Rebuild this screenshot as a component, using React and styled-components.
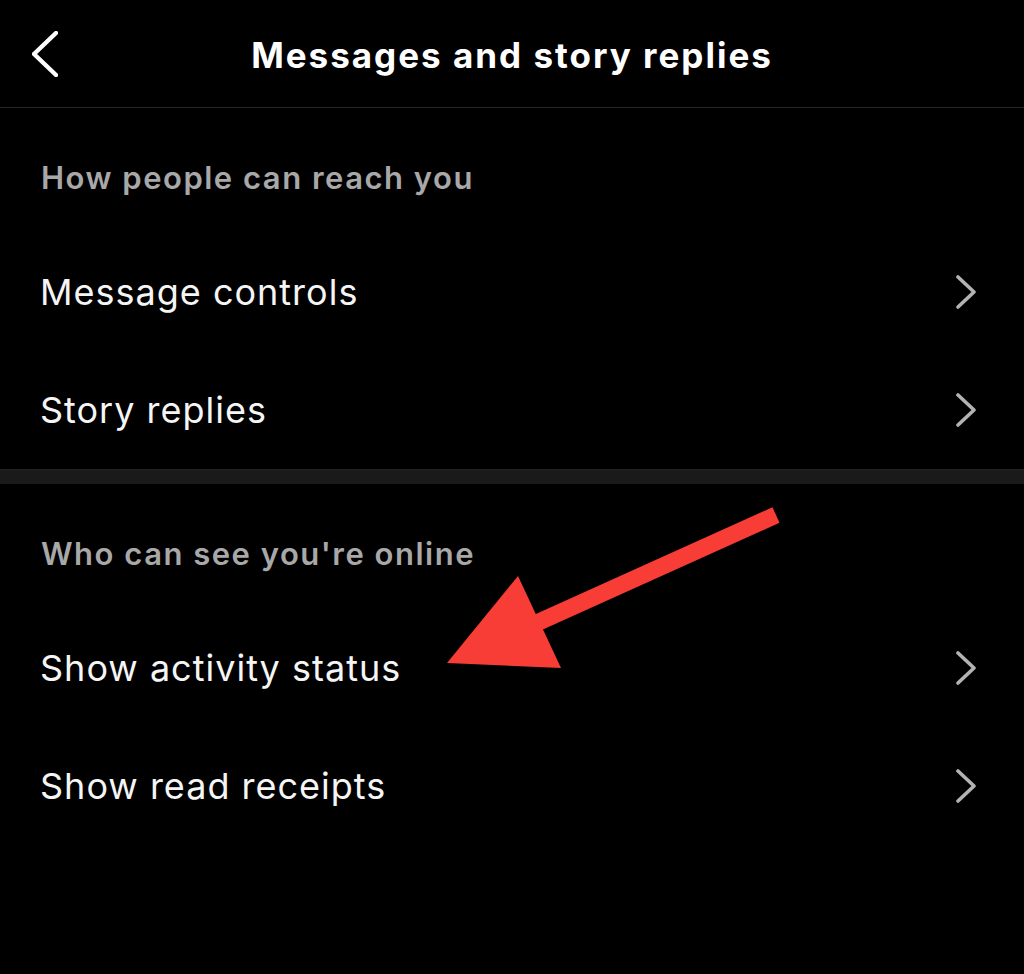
import React from 'react';
import styled, { createGlobalStyle } from 'styled-components';

const GlobalStyle = createGlobalStyle`
  html, body {
    margin: 0;
    padding: 0;
    background: #000;
  }
  body {
    font-family: Inter, "Noto Sans", "Liberation Sans", sans-serif;
    -webkit-font-smoothing: antialiased;
  }
`;

const Screen = styled.div`
  position: relative;
  width: 1024px;
  height: 974px;
  background: #000;
  color: #fff;
  overflow: hidden;
`;

const Header = styled.header`
  display: grid;
  grid-template-columns: 100px 1fr 100px;
  align-items: center;
  height: 107px;
  border-bottom: 1px solid #262626;
`;

const BackButton = styled.button`
  display: flex;
  align-items: center;
  justify-content: flex-start;
  padding: 0 0 0 32px;
  height: 100%;
  background: none;
  border: none;
  cursor: pointer;
`;

const Title = styled.h1`
  margin: 0;
  text-align: center;
  font-size: 35px;
  font-weight: 700;
  letter-spacing: 2px;
  color: #fff;
  padding-top: 3px;
`;

const SectionTitle = styled.div`
  box-sizing: border-box;
  height: 125px;
  padding: 51px 41px 0;
  font-size: 31px;
  line-height: 38px;
  font-weight: 600;
  letter-spacing: 1.5px;
  color: #a8a8a8;
`;

const Row = styled.div`
  display: flex;
  align-items: center;
  justify-content: space-between;
  height: 118px;
  padding: 0 48px 0 40px;
  font-size: 36px;
  font-weight: 400;
  letter-spacing: 1px;
  color: #f5f5f5;
  cursor: pointer;
`;

const Divider = styled.div`
  height: 15px;
  background: #1a1a1a;
  border-top: 1px solid #232323;
  box-sizing: border-box;
`;

const Arrow = styled.svg`
  position: absolute;
  left: 0;
  top: 0;
  pointer-events: none;
`;

const Chevron = ({ left, color = '#b3b3b3', width = 20, height = 34, stroke = 3.6 }) => (
  <svg width={width} height={height} viewBox={`0 0 ${width} ${height}`} fill="none">
    <polyline
      points={
        left
          ? `${width - 2},2 2,${height / 2} ${width - 2},${height - 2}`
          : `2,2 ${width - 2},${height / 2} 2,${height - 2}`
      }
      stroke={color}
      strokeWidth={stroke}
      strokeLinecap="round"
      strokeLinejoin="round"
    />
  </svg>
);

const sections = [
  { title: 'How people can reach you', items: ['Message controls', 'Story replies'] },
  { title: "Who can see you're online", items: ['Show activity status', 'Show read receipts'] },
];

export default function App() {
  return (
    <>
      <GlobalStyle />
      <Screen>
        <Header>
          <BackButton aria-label="Back">
            <Chevron left color="#fff" width={26} height={46} stroke={4.4} />
          </BackButton>
          <Title>Messages and story replies</Title>
          <div />
        </Header>

        {sections.map((section, i) => (
          <React.Fragment key={section.title}>
            {i > 0 && <Divider />}
            <SectionTitle>{section.title}</SectionTitle>
            {section.items.map((item) => (
              <Row key={item}>
                <span>{item}</span>
                <Chevron />
              </Row>
            ))}
          </React.Fragment>
        ))}

        <Arrow width="1024" height="974" viewBox="0 0 1024 974">
          <line x1="776" y1="515" x2="530" y2="626" stroke="#f73d35" strokeWidth="17" />
          <polygon points="447,663 518,576 561,668" fill="#f73d35" />
        </Arrow>
      </Screen>
    </>
  );
}
